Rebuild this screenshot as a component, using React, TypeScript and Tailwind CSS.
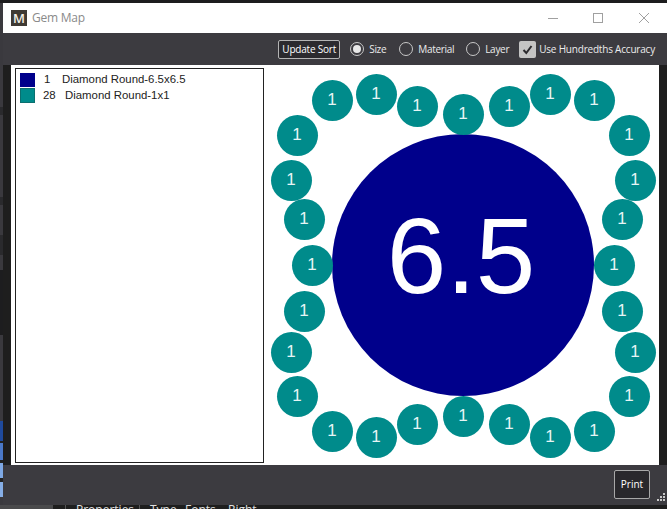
const gems = [
  [332, 100], [376, 94], [417, 106], [463, 114], [509, 106], [550, 94], [594, 100],
  [629, 135], [635, 180], [622, 219], [614, 265], [622, 311], [635, 352], [629, 396],
  [594, 431], [550, 437], [509, 424], [463, 416], [417, 424], [376, 437], [332, 431],
  [297, 396], [291, 352], [304, 311], [312, 265], [304, 219], [291, 180], [297, 135],
];

// canvas origin in window coords
const originX = 261;
const originY = 65;

function Radio({ label, width, checked }: { label: string; width: string; checked?: boolean }) {
  return (
    <div className="flex items-center gap-[5px]">
      <div className="w-[14px] h-[14px] rounded-full border border-[#c8c8c8] flex items-center justify-center">
        {checked && <div className="w-[8px] h-[8px] rounded-full bg-[#e8e8e8]" />}
      </div>
      <span className={`${width} whitespace-nowrap tracking-[-0.3px]`}>{label}</span>
    </div>
  );
}

export default function App() {
  return (
    <div className="w-[667px] h-[509px] overflow-hidden flex flex-col bg-[#1e1e1e] font-['Open_Sans',sans-serif]">
      <div className="h-[3px] shrink-0 bg-[#1c1c1e]" />
      <div className="flex-1 flex min-h-0">
        {/* sliver of the window behind */}
        <div className="w-[3px] shrink-0 bg-[#3a393e] flex flex-col">
          <div className="h-[104px] shrink-0" />
          <div className="h-[8px] shrink-0 bg-[#2a2a2d]" />
          <div className="h-[82px] shrink-0" />
          <div className="h-[8px] shrink-0 bg-[#2a2a2d]" />
          <div className="h-[30px] shrink-0" />
          <div className="h-[20px] shrink-0 bg-[#2a2a2d]" />
          <div className="h-[15px] shrink-0" />
          <div className="h-[65px] shrink-0 bg-[#1d1d1f]" />
          <div className="h-[86px] shrink-0" />
          <div className="h-[20px] shrink-0 bg-[#1f4a9c]" />
          <div className="h-[2px] shrink-0 bg-[#222]" />
          <div className="h-[17px] shrink-0 bg-[#4a78c8]" />
          <div className="h-[3px] shrink-0 bg-[#222]" />
          <div className="h-[15px] shrink-0 bg-[#7ea8e4]" />
          <div className="h-[4px] shrink-0 bg-[#222]" />
          <div className="h-[15px] shrink-0 bg-[#86aee6]" />
        </div>
        <div className="flex-1 flex flex-col min-w-0">
          {/* title bar */}
          <div className="h-[30px] shrink-0 bg-white flex items-center pl-[8px]">
            <div className="w-[16px] h-[16px] bg-[#3f3a33] flex items-center justify-center text-[#f3efe6] text-[13px] font-semibold leading-none">
              M
            </div>
            <span className="ml-[5px] text-[12px] tracking-[-0.25px] text-[#8a8a8a]">Gem Map</span>
            <div className="ml-auto flex items-center text-[#a0a0a0] pr-[17px]">
              <svg width="12" height="12" viewBox="0 0 12 12" className="mr-[33px]">
                <path d="M1 6.5h10" stroke="currentColor" strokeWidth="1" />
              </svg>
              <svg width="12" height="12" viewBox="0 0 12 12" className="mr-[34px]">
                <rect x="1.5" y="1.5" width="9" height="9" fill="none" stroke="currentColor" />
              </svg>
              <svg width="12" height="12" viewBox="0 0 12 12">
                <path d="M1 1l10 10M11 1L1 11" stroke="currentColor" strokeWidth="1" />
              </svg>
            </div>
          </div>

          {/* toolbar */}
          <div className="h-[32px] shrink-0 bg-[#3c3b40] flex items-center justify-end pr-[12px] text-[10px] tracking-[-0.2px] text-[#ececec]">
            <button className="h-[19px] w-[62px] mr-[10px] rounded-[2px] border border-[#b4b4b4] bg-[#2b2a2e] text-white text-[10px]">
              Update Sort
            </button>
            <div className="flex items-center gap-[12px]">
              <Radio label="Size" width="w-[18px]" checked />
              <Radio label="Material" width="w-[36px]" />
              <Radio label="Layer" width="w-[24px]" />
            </div>
            <div className="ml-[10px] w-[17px] h-[17px] rounded-[2px] bg-[#c4c4c4] flex items-center justify-center">
              <svg width="13" height="13" viewBox="0 0 13 13">
                <path d="M2.5 7l2.8 3L10.5 3" fill="none" stroke="#2b2a2e" strokeWidth="2" />
              </svg>
            </div>
            <span className="ml-[3px]">Use Hundredths Accuracy</span>
          </div>

          {/* white panel */}
          <div className="ml-[8px] mr-[8px] h-[400px] shrink-0 bg-white relative flex">
            <div className="ml-[4px] mt-[3px] w-[249px] h-[395px] border border-[#222] flex flex-col pl-[4px] pt-[4px] font-['Liberation_Sans',sans-serif] text-[11.4px] text-[#222]">
              <div className="flex items-center h-[14px]">
                <div className="w-[15px] h-[14px] bg-[#00008b]" />
                <span className="ml-[9px] w-[18px]">1</span>
                <span>Diamond Round-6.5x6.5</span>
              </div>
              <div className="flex items-center h-[15px] mt-[1px]">
                <div className="w-[15px] h-[15px] bg-[#008b8b] border border-[#0b6f6f]" />
                <span className="ml-[8px] w-[22px]">28</span>
                <span>Diamond Round-1x1</span>
              </div>
            </div>
            {/* gem canvas */}
            <div className="absolute top-0 bottom-0 left-[250px] right-0 font-['Liberation_Sans',sans-serif]">
              <div className="absolute left-[71px] top-[69px] w-[262px] h-[262px] rounded-full bg-[#00008b] flex items-center justify-center pb-[18px] pr-[4px] text-white text-[107px] leading-none">
                6.5
              </div>
              {gems.map(([x, y], i) => (
                <div
                  key={i}
                  className="absolute w-[41px] h-[41px] rounded-full bg-[#008b8b] flex items-center justify-center pb-[1px] text-[17px] text-[#e6f5f5]"
                  style={{ left: x - originX - 20.5, top: y - originY - 20.5 }}
                >
                  1
                </div>
              ))}
            </div>
          </div>

          {/* footer */}
          <div className="h-[40px] shrink-0 bg-[#3c3b40] flex items-start justify-end pt-[5px] pr-[17px] relative">
            <button className="w-[36px] h-[29px] rounded-[2px] border border-[#a8a8a8] bg-[#29282c] text-white text-[10px]">
              Print
            </button>
            {/* resize grip */}
            <svg width="9" height="9" viewBox="0 0 9 9" className="absolute right-[2px] bottom-[3px] text-[#c8c8c8]">
              <path d="M7 0h2v2H7zM4 3h2v2H4zM7 3h2v2H7zM1 6h2v2H1zM4 6h2v2H4zM7 6h2v2H7z" fill="currentColor" />
            </svg>
          </div>
        </div>
      </div>

      {/* clipped strip of the window behind */}
      <div className="h-[4px] shrink-0 overflow-hidden flex bg-[#1e1e1e] text-[12px] leading-[10px] text-[#e0e0e0]">
        <div className="w-[53px] h-[4px] bg-[#4a4a4c]" />
        <span className="ml-[12px] w-[74px] pl-[10px] border-l border-[#555]">Properties</span>
        <span className="w-[46px] pl-[10px] border-l border-[#555]">Type</span>
        <span className="w-[43px]">Fonts</span>
        <span className="w-[44px]">Right</span>
      </div>
    </div>
  );
}
